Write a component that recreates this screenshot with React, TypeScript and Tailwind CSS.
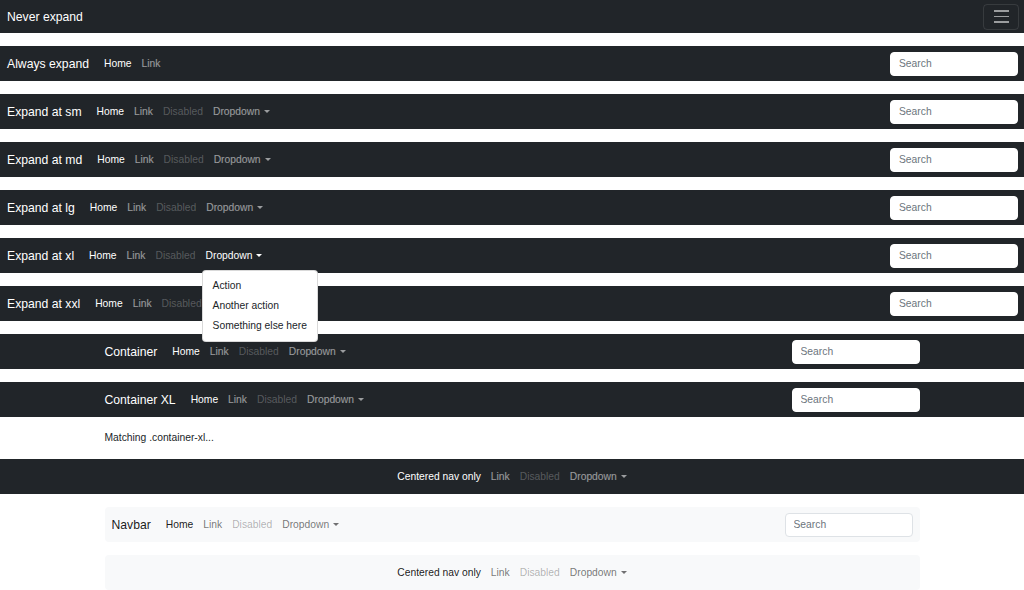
import type { ReactNode } from "react";

const font = "font-['Liberation_Sans','Noto_Sans',sans-serif]";

type Tone = "dark" | "light";

function Caret() {
  return (
    <span className="ml-[4px] inline-block h-0 w-0 border-x-[3.5px] border-t-[3.5px] border-x-transparent border-t-current align-[2px]" />
  );
}

function NavLinks({
  tone,
  home = "Home",
  limit,
  open = false,
}: {
  tone: Tone;
  home?: string;
  limit?: number;
  open?: boolean;
}) {
  const active = tone === "dark" ? "text-white" : "text-black/90";
  const muted = tone === "dark" ? "text-white/55" : "text-black/55";
  const disabled = tone === "dark" ? "text-white/25" : "text-black/30";
  const items = [
    { label: home, cls: active },
    { label: "Link", cls: muted },
    { label: "Disabled", cls: disabled },
    { label: "Dropdown", cls: open ? active : muted, dropdown: true },
  ].slice(0, limit ?? 4);

  return (
    <ul className="flex items-center">
      {items.map((it) => (
        <li key={it.label} className="relative">
          <span className={`block px-[5px] py-[5px] text-[10.3px] leading-[16px] ${it.cls}`}>
            {it.label}
            {it.dropdown && <Caret />}
          </span>
          {it.dropdown && open && (
            <div className="absolute left-[1px] top-full z-10 mt-[1px] whitespace-nowrap rounded-[4px] border border-black/15 bg-white py-[5px]">
              {["Action", "Another action", "Something else here"].map((a) => (
                <div key={a} className="px-[10px] text-[10.3px] leading-[20px] text-[#212529]">
                  {a}
                </div>
              ))}
            </div>
          )}
        </li>
      ))}
    </ul>
  );
}

function Search({ tone }: { tone: Tone }) {
  return (
    <input
      placeholder="Search"
      className={`block h-[24px] w-[128px] rounded-[4px] border bg-white px-[8px] text-[10.3px] text-[#212529] outline-none placeholder:text-[#6c757d] ${
        tone === "dark" ? "border-white" : "border-[#dee2e6]"
      }`}
    />
  );
}

function DarkBar({ children, className = "" }: { children: ReactNode; className?: string }) {
  return <nav className={`mb-[13px] flex h-[35px] items-center bg-[#212529] ${className}`}>{children}</nav>;
}

function Brand({ children, tone = "dark" }: { children: ReactNode; tone?: Tone }) {
  return (
    <span className={`mr-[10px] text-[12.2px] leading-[20px] ${tone === "dark" ? "text-white" : "text-black/90"}`}>
      {children}
    </span>
  );
}

export default function App() {
  const expands = ["sm", "md", "lg", "xl", "xxl"];

  return (
    <div className={`h-[590px] w-[1024px] overflow-hidden bg-white ${font}`}>
      {/* Never expand */}
      <nav className="mb-[13px] flex h-[33px] items-center justify-between bg-[#212529] pl-[7px] pr-[5px]">
        <Brand>Never expand</Brand>
        <button className="flex h-[26px] w-[36px] flex-col items-center justify-center gap-[4px] rounded-[4px] border border-white/10">
          <span className="h-[1.5px] w-[15px] bg-white/55" />
          <span className="h-[1.5px] w-[15px] bg-white/55" />
          <span className="h-[1.5px] w-[15px] bg-white/55" />
        </button>
      </nav>

      <DarkBar className="pl-[7px] pr-[6px]">
        <Brand>Always expand</Brand>
        <NavLinks tone="dark" limit={2} />
        <div className="ml-auto">
          <Search tone="dark" />
        </div>
      </DarkBar>

      {expands.map((bp) => (
        <DarkBar key={bp} className="pl-[7px] pr-[6px]">
          <Brand>Expand at {bp}</Brand>
          <NavLinks tone="dark" open={bp === "xl"} />
          <div className="ml-auto">
            <Search tone="dark" />
          </div>
        </DarkBar>
      ))}

      {["Container", "Container XL"].map((c) => (
        <DarkBar key={c}>
          <div className="mx-auto flex w-[815px] items-center">
            <Brand>{c}</Brand>
            <NavLinks tone="dark" />
            <div className="ml-auto">
              <Search tone="dark" />
            </div>
          </div>
        </DarkBar>
      ))}

      <div className="mx-auto -mt-[13px] w-[815px] pb-[13px] pt-[13px]">
        <p className="text-[10.3px] leading-[16px] text-[#212529]">Matching .container-xl...</p>
      </div>

      <DarkBar className="justify-center">
        <NavLinks tone="dark" home="Centered nav only" />
      </DarkBar>

      <div className="mx-auto w-[815px]">
        <nav className="mb-[13px] flex h-[35px] items-center rounded-[4px] bg-[#f8f9fa] pl-[7px] pr-[7px]">
          <Brand tone="light">Navbar</Brand>
          <NavLinks tone="light" />
          <div className="ml-auto">
            <Search tone="light" />
          </div>
        </nav>
        <nav className="flex h-[35px] items-center justify-center rounded-[4px] bg-[#f8f9fa]">
          <NavLinks tone="light" home="Centered nav only" />
        </nav>
      </div>
    </div>
  );
}
